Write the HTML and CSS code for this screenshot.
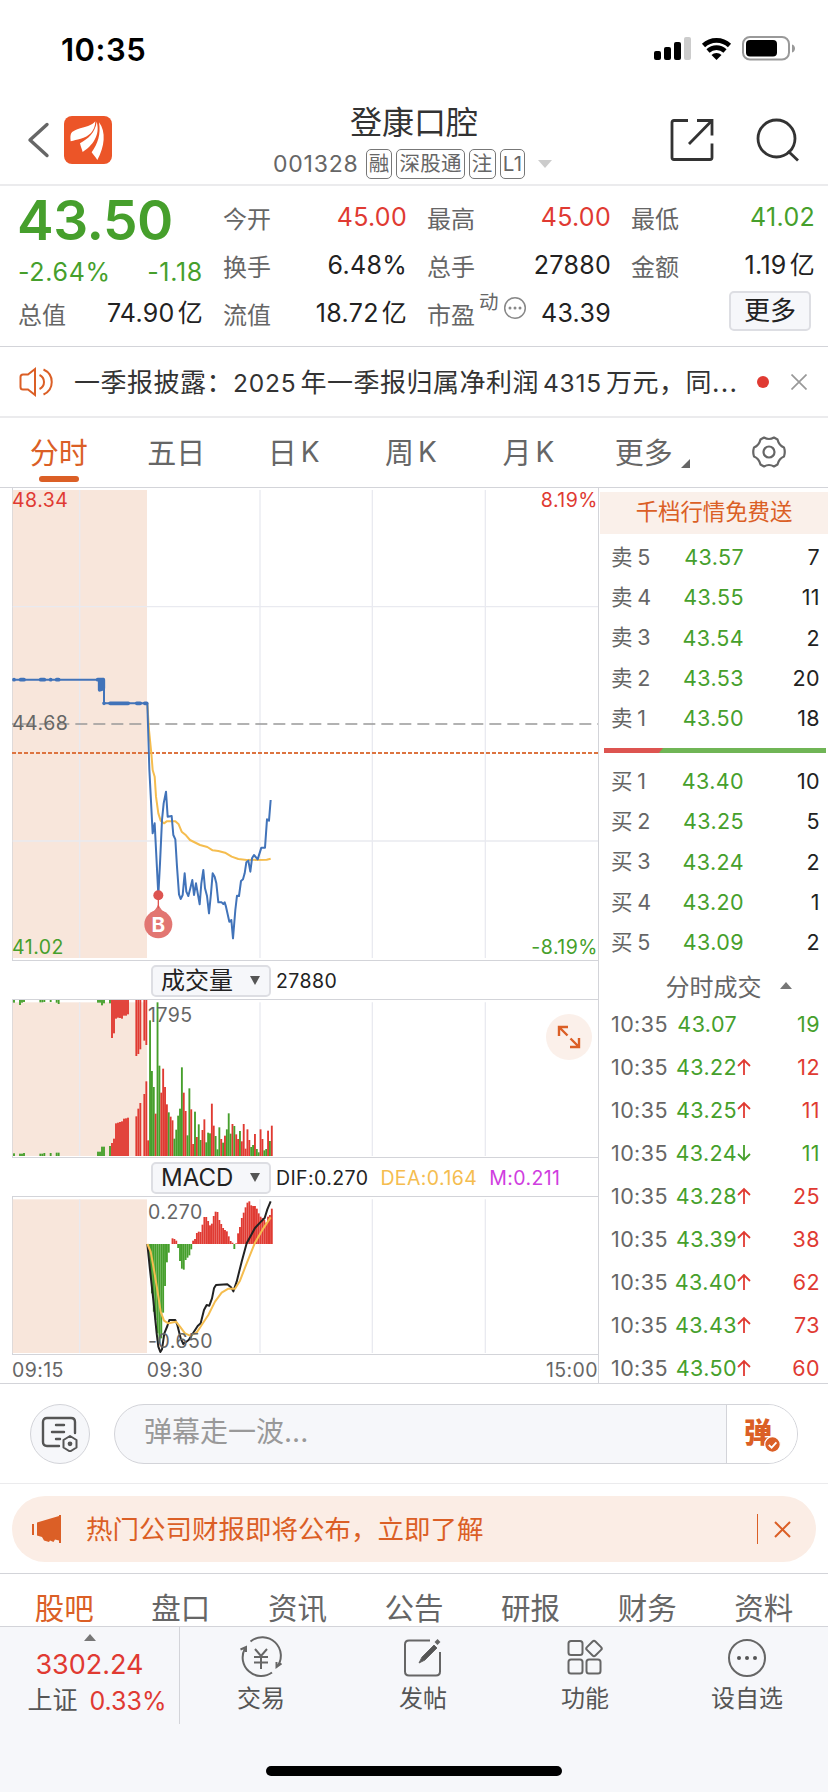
FILE: index.html
```html
<!DOCTYPE html>
<html lang="zh-CN">
<head>
    <meta charset="UTF-8">
    <meta name="viewport" content="width=device-width, initial-scale=1.0">
    <title>登康口腔 001328</title>
    <link rel="stylesheet" href="styles.css">
</head>
<body>
    <div class="status-bar">
        <span class="clock">10:35</span>
        <svg class="status-icons" width="144" height="28" viewBox="0 0 144 28">
            <rect x="1" y="16" width="7" height="9" rx="2"/>
            <rect x="11" y="12" width="7" height="13" rx="2"/>
            <rect x="21" y="7" width="7" height="18" rx="2"/>
            <rect x="31" y="2" width="7" height="23" rx="2" fill="#ccc"/>
            <path d="M50.5 10.5a19 19 0 0 1 26 0M55 16a12.5 12.5 0 0 1 17 0" fill="none" stroke="#000" stroke-width="4.6"/>
            <path d="M58.500 20a7 7 0 0 1 10 0l-5 5z"/>
            <rect x="90" y="2" width="46" height="22.500" rx="7" fill="none" stroke="#999" stroke-width="2"/>
            <rect x="93" y="5" width="31" height="16.500" rx="4"/>
            <path d="M139 9.500c4 1 4 7 0 8z" fill="#999"/>
        </svg>
    </div>

    <header class="header">
        <div class="header-left">
            <svg width="26" height="40" viewBox="0 0 26 40" fill="none" stroke="#666" stroke-width="3.4" stroke-linecap="round" stroke-linejoin="round"><path d="M21 4.500L4 20l17 15.500"/></svg>
            <svg class="logo" width="48" height="48" viewBox="0 0 144 144">
                <rect width="144" height="144" rx="24" fill="#ec5528"/>
                <path d="M20 76C18 52 20 48 40 40c24-9 44-10 54-24-1 30-19 46-44 52-12 3-20 5-30 8z" fill="#fff"/>
                <path d="M56 108c-3-10-6-16-8-26 24-14 46-32 50-65 12 42-14 72-42 91z" fill="#fff"/>
                <path d="M100 132c-6-10-11-14-17-23 18-26 28-52 22-90 22 28 17 74-5 113z" fill="#fff"/>
            </svg>
        </div>
        <div class="header-title">
            <h1>登康口腔</h1>
            <div class="stock-meta">
                <span class="code">001328</span>
                <span class="tag">融</span>
                <span class="tag">深股通</span>
                <span class="tag">注</span>
                <span class="tag">L1</span>
                <i class="tri-down light"></i>
            </div>
        </div>
        <div class="header-right">
            <svg width="44" height="44" viewBox="0 0 44 44" fill="none" stroke="#333" stroke-width="2.800"><path d="M18 2.500H4q-2 0-2 2v35q0 2 2 2h36q2 0 2-2V25.500M27 2.500h15v15M42 2.500L19 26"/></svg>
            <svg width="44" height="44" viewBox="0 0 44 44" fill="none" stroke="#333" stroke-width="2.800"><circle cx="20.500" cy="20.500" r="18.500"/><path d="M32 33l10 9.500"/></svg>
        </div>
    </header>

    <section class="quote">
        <div class="quote-col main">
            <div class="price green">43.50</div>
            <div class="row change green"><span>-2.64%</span><span>-1.18</span></div>
            <div class="row"><label>总值</label><span>74.90<em>亿</em></span></div>
        </div>
        <div class="quote-col">
            <div class="row"><label>今开</label><span class="red">45.00</span></div>
            <div class="row"><label>换手</label><span>6.48%</span></div>
            <div class="row"><label>流值</label><span>18.72<em>亿</em></span></div>
        </div>
        <div class="quote-col">
            <div class="row"><label>最高</label><span class="red">45.00</span></div>
            <div class="row"><label>总手</label><span>27880</span></div>
            <div class="row">
                <label class="pe">市盈<sup>动</sup><svg width="24" height="24" viewBox="0 0 24 24"><circle cx="12" cy="12" r="10.300" fill="none" stroke="#888" stroke-width="1.500"/><g fill="#888"><circle cx="7" cy="12" r="1.500"/><circle cx="12" cy="12" r="1.500"/><circle cx="17" cy="12" r="1.500"/></g></svg></label>
                <span>43.39</span>
            </div>
        </div>
        <div class="quote-col">
            <div class="row"><label>最低</label><span class="green">41.02</span></div>
            <div class="row"><label>金额</label><span>1.19<em>亿</em></span></div>
            <div class="row end"><button class="more-btn">更多</button></div>
        </div>
    </section>

    <section class="notice">
        <svg width="36" height="32" viewBox="0 0 36 32" fill="none" stroke="#db5f26" stroke-width="2"><path d="M16 3v26l-7-5.500H4q-2.500 0-2.500-2.500V11q0-2.500 2.500-2.500h5zM20.500 9c6 3 6 11 0 14M24.500 3.500c11 5 11 20 0 25"/></svg>
        <p>一季报披露：<b>2025</b>年一季报归属净利润<b>4315</b>万元，同<u>...</u></p>
        <i class="dot"></i>
        <svg width="16" height="16" viewBox="0 0 16 16" stroke="#999" stroke-width="1.700"><path d="M.5.5l15 15M15.500.5l-15 15"/></svg>
    </section>

    <nav class="period-tabs">
        <a class="active">分时</a>
        <a>五日</a>
        <a>日<span>K</span></a>
        <a>周<span>K</span></a>
        <a>月<span>K</span></a>
        <a class="more">更多<i></i></a>
        <a class="settings"><svg width="34" height="34" viewBox="0 0 34 34" fill="none" stroke="#666" stroke-width="2.200" stroke-linejoin="round"><path d="M12 2.500Q17 5.500 22 2.500L25.500 4.500Q27 10.500 32 12.500Q33.500 17 32 21.500Q27 23.500 25.500 29.500L22 31.500Q17 28.500 12 31.500L8.500 29.500Q7 23.500 2 21.500Q.5 17 2 12.500Q7 10.500 8.500 4.500Z"/><circle cx="17" cy="17" r="5.500"/></svg></a>
    </nav>

    <main class="market">
        <div class="charts">
            <div class="chart price-chart">
                <svg viewBox="36 24 1758 1416">
                    <rect x="38" y="30" width="403" height="1404" fill="#f8e6db"/>
                    <g stroke="#e9eaf0" stroke-width="4">
                        <path d="M239 30V1434M780 30V1434M1117 30V1434M1456 30V1434M38 380H1794M38 1083H1794"/>
                    </g>
                    <path d="M36 732H1794" stroke="#999" stroke-width="5" stroke-dasharray="36 18" stroke-dashoffset="26"/>
                    <path d="M36 819H1794" stroke="#dd7440" stroke-width="6" stroke-dasharray="12 6"/>
                    <path class="line avg" d="M442 670L447 750 454 820 458 870 464 890 468 950 475 1000 482 1022 492 1030 500 1024H526L536 1033 545 1055 558 1066 570 1080 600 1095 622 1101 638 1111 655 1113 675 1118 695 1130 715 1137 740 1140 800 1139 812 1136"/>
                    <path class="line now" d="M38 599H312V670H442L448 868 458 1060 464 1030 475 1245 480 1150 486 1020 491 970 498 935 503 1010 515 1008 520 1065 526 1078 531 1160 537 1243 542 1257 548 1245 554 1180 559 1235 565 1248 571 1225 577 1200 582 1245 588 1210 599 1273 604 1210 610 1170 615 1225 621 1248 627 1300 633 1240 638 1180 644 1190 649 1210 655 1267H665L670 1272 674 1267 678 1280 688 1325 694 1320 699 1375 706 1290 711 1247 717 1248 723 1203 729 1198 734 1180 739 1147 745 1142 751 1175 756 1135 762 1125 773 1138 784 1103H795L801 1018 807 1022 812 960"/>
                    <path class="dots" d="M42 599h.1M62 599H72M122 599H133M152 599h.1M170 599H176M293 599H309M299 630V599M305 628V599M310 625V599M312 670h.1M330 670H385M410 670H421M434 670H440"/>
                    <g fill="#e27672">
                        <path d="M475 1272Q482 1292 500 1300H450Q468 1292 475 1272Z"/>
                        <circle cx="475" cy="1333" r="42"/>
                        <path d="M475 1246V1285" stroke="#dd5450" stroke-width="4"/>
                        <circle cx="475" cy="1246" r="15" fill="#dd5450"/>
                    </g>
                    <text x="475" y="1356" class="buy-mark">B</text>
                </svg>
                <span class="label top left red">48.34</span>
                <span class="label top right red">8.19%</span>
                <span class="label mid left">44.68</span>
                <span class="label bottom left green">41.02</span>
                <span class="label bottom right green">-8.19%</span>
            </div>
            <div class="indicator">
                <button class="select">成交量<i class="tri-down"></i></button>
                <span>27880</span>
            </div>
            <div class="chart sub-chart">
                <svg viewBox="0 0 1758 471">
                    <rect x="2" y="7" width="403" height="461" fill="#f8e6db"/>
                    <path d="M203 7V468M744 7V468M1081 7V468M1420 7V468" stroke="#e9eaf0" stroke-width="4"/>
                    <g id="volume"></g>
                </svg>
                <span class="label sub-top">1795</span>
                <div class="expand">
                    <svg width="24" height="24" viewBox="0 0 24 24" fill="none" stroke="#db5f26" stroke-width="2.400"><path d="M2 11V2h9M2 2l8.500 8.500M22 13v9h-9M22 22l-8.500-8.500"/></svg>
                </div>
            </div>
            <div class="indicator">
                <button class="select">MACD<i class="tri-down"></i></button>
                <span>DIF:0.270</span>
                <span class="yellow">DEA:0.164</span>
                <span class="purple">M:0.211</span>
            </div>
            <div class="chart sub-chart">
                <svg viewBox="0 0 1758 471">
                    <rect x="2" y="7" width="403" height="461" fill="#f8e6db"/>
                    <path d="M203 7V468M744 7V468M1081 7V468M1420 7V468" stroke="#e9eaf0" stroke-width="4"/>
                    <g id="macd"></g>
                    <g transform="translate(354 -21)">
                        <path class="line dif" d="M52 162L60 240 70 330 80 430 85 470 91 486 96 478 103 430 112 408 118 390H136L142 405 152 445 160 462 176 450 190 428 203 408 212 400 222 360 230 345 238 347 246 325 252 295 258 285 292 283 303 292 310 304 320 275 335 215 350 160 362 138 375 114 390 98 404 84 412 58 422 34"/>
                        <path class="line avg" d="M52 162L62 185 72 240 82 300 92 365 102 392 115 400 138 395 150 410 165 430 180 437 200 428 215 405 235 375 255 335 275 308 295 296 315 296 330 272 350 220 375 158 400 115 422 82"/>
                    </g>
                </svg>
                <span class="label sub-top">0.270</span>
                <span class="label sub-bottom">-0.650</span>
            </div>
            <div class="time-axis"><span>09:15</span><span>09:30</span><span>15:00</span></div>
        </div>

        <aside class="book">
            <div class="promo">千档行情免费送</div>
            <ul class="levels" id="sells"></ul>
            <div class="ratio"><i></i></div>
            <ul class="levels" id="buys"></ul>
            <div class="ticks-title">分时成交<i class="tri-up"></i></div>
            <ul class="ticks" id="ticks"></ul>
        </aside>
    </main>

    <section class="danmu">
        <div class="danmu-settings">
            <svg width="40" height="36" viewBox="0 0 40 36" fill="none" stroke="#555" stroke-width="2.400" stroke-linecap="round"><path d="M19 30H7q-4 0-4-4V6q0-4 4-4h24q4 0 4 4v11M16 9h8M12 16h12M16 23h4"/><path d="M30 20l6.500 4v7.500L30 35.500l-6.500-4V24z" stroke-width="2" stroke-linejoin="round"/><circle cx="30" cy="27.800" r="1.200"/></svg>
        </div>
        <div class="danmu-input">
            <span>弹幕走一波...</span>
            <div class="danmu-toggle">弹<svg width="17" height="17" viewBox="0 0 17 17"><circle cx="8.500" cy="8.500" r="7.800" fill="#db5f26" stroke="#fff" stroke-width="1.200"/><path d="M4.800 8.800l2.800 2.800 4.800-5.300" fill="none" stroke="#fff" stroke-width="1.800"/></svg></div>
        </div>
    </section>

    <section class="hot-wrap">
        <div class="hot">
            <svg width="32" height="28" viewBox="0 0 32 28" fill="#db5f26"><path d="M1 9h2v11H1zM6 7.500L28 1V0h2v28h-2v-2.500l-4-1-1.500 2.500-3.500-1.500-1 1.500-5-1.500-2-3.500-5-1.500z"/></svg>
            <p>热门公司财报即将公布，立即了解</p>
            <i class="sep"></i>
            <svg width="17" height="17" viewBox="0 0 17 17" stroke="#db5f26" stroke-width="2"><path d="M1 1l15 15M16 1L1 16"/></svg>
        </div>
    </section>

    <nav class="info-tabs">
        <a class="active">股吧</a>
        <a>盘口</a>
        <a>资讯</a>
        <a>公告</a>
        <a>研报</a>
        <a>财务</a>
        <a>资料</a>
    </nav>

    <footer class="bottom-bar">
        <div class="index">
            <i class="tri-up"></i>
            <strong>3302.24</strong>
            <div><span>上证</span><b>0.33%</b></div>
        </div>
        <a>
            <svg viewBox="0 0 44 44"><path d="M11.500 5.500A18.500 18.500 0 0 1 38 31M33 36.500A18.500 18.500 0 0 1 6 12.500M1.500 13.500L7 11v5M42.500 27.500l-5 3.500V26"/><path d="M16 13l6 7 6-7M22 20v13M15 21h14M15 26.500h14"/></svg>
            交易
        </a>
        <a>
            <svg viewBox="0 0 44 44"><path d="M29 4.500H8q-4 0-4 4v27q0 4 4 4h27q4 0 4-4V16"/><path d="M18 27l3-6 12-12 3 3-12 12z" fill="#555" stroke-width="1"/><path d="M35 7.500l3-3" stroke-width="4"/></svg>
            发帖
        </a>
        <a>
            <svg viewBox="0 0 44 44"><rect x="5.500" y="5" width="14" height="14" rx="2.500"/><rect x="5.500" y="23.500" width="14" height="14" rx="2.500"/><rect x="23.500" y="23.500" width="14" height="14" rx="2.500"/><rect x="25" y="6.500" width="12" height="12" rx="2" transform="rotate(45 31 12.500)"/></svg>
            功能
        </a>
        <a>
            <svg viewBox="0 0 44 44"><circle cx="22" cy="22" r="18"/><g fill="#555" stroke="none"><circle cx="14" cy="22" r="2"/><circle cx="22" cy="22" r="2"/><circle cx="30" cy="22" r="2"/></g></svg>
            设自选
        </a>
    </footer>
    <div class="home-indicator"><i></i></div>

    <script src="script.js"></script>
</body>
</html>
```

FILE: styles.css
```css
* {
    box-sizing: border-box;
}

:root {
    --red: #e03a32;
    --green: #469f2c;
    --orange: #db5f26;
    --yellow: #f5bd4f;
    --text: #222;
    --muted: #666;
    --line: #d3d4d9;
    --panel: #f6f7fa;
}

body {
    margin: 0;
    width: 828px;
    height: 1792px;
    overflow: hidden;
    background: #fff;
    color: var(--text);
    font-family: Inter, "Noto Sans CJK SC", sans-serif;
    font-size: 24px;
}

h1, p, ul {
    margin: 0;
    padding: 0;
    font-weight: 400;
}

ul {
    list-style: none;
}

i, em {
    font-style: normal;
}

svg {
    display: block;
    flex-shrink: 0;
}

button {
    font-family: inherit;
    color: var(--text);
    background: var(--panel);
    border: 2px solid #dddee3;
    border-radius: 5px;
    padding: 0;
}

.red { color: var(--red); }
.green { color: var(--green); }
.yellow { color: var(--yellow); }
.purple { color: #cf3de0; }

.tri-down, .tri-up {
    width: 0;
    height: 0;
    border: 6px solid transparent;
}

.tri-down {
    border-top: 9px solid #555;
    border-bottom: 0;
}

.tri-down.light {
    border-width: 8px 7px 0;
    border-top-color: #ccc;
    margin-left: 9px;
}

.tri-up {
    border-bottom: 7px solid #777;
    border-top: 0;
}

/* Status bar */
.status-bar {
    height: 94px;
    padding: 4px 31px 0 61px;
    display: flex;
    justify-content: space-between;
    align-items: center;
}

.clock {
    font-size: 31px;
    font-weight: 600;
    color: #000;
    letter-spacing: 0.5px;
}

/* Header */
.header {
    height: 92px;
    border-bottom: 2px solid #ebebed;
    display: grid;
    grid-template-columns: 230px 1fr 230px;
    align-items: center;
}

.header-left, .header-right {
    display: flex;
    align-items: center;
}

.header-left {
    padding-left: 26px;
    gap: 12px;
    margin-top: 2px;
}

.header-right {
    justify-content: flex-end;
    gap: 42px;
    padding-right: 28px;
    margin-top: 2px;
}

.header-title {
    text-align: center;
}

.header-title h1 {
    font-size: 32px;
    line-height: 42px;
    margin-top: 6px;
    color: #333;
}

.stock-meta {
    display: flex;
    align-items: center;
    gap: 4px;
    padding-left: 43px;
    height: 36px;
    margin-top: 2px;
    color: var(--muted);
}

.stock-meta .code {
    font-size: 23px;
    letter-spacing: 0.8px;
    margin-right: 3px;
}

.tag {
    height: 30px;
    line-height: 27px;
    padding: 0 2px;
    border: 1.5px solid #777;
    border-radius: 5px;
    font-size: 20.5px;
    letter-spacing: 0.3px;
}

/* Quote */
.quote {
    height: 161px;
    border-bottom: 1px solid var(--line);
    padding: 7px 13px 0 19px;
    display: grid;
    grid-template-columns: repeat(4, 184px);
    column-gap: 20px;
}

.row {
    display: flex;
    justify-content: space-between;
    align-items: center;
    height: 48px;
    font-size: 25px;
    letter-spacing: 0.3px;
    white-space: nowrap;
}

.row.end {
    justify-content: flex-end;
}

.row label {
    font-size: 24px;
    letter-spacing: 0;
    color: var(--muted);
}

.row em {
    margin-left: 3px;
    line-height: 0;
}

.quote-col.main {
    margin-left: -1px;
}

.quote-col.main .price {
    height: 56px;
    margin-left: -1px;
    font-size: 55px;
    line-height: 55px;
    font-weight: 600;
    letter-spacing: -0.5px;
}

.quote-col.main .change {
    height: 40px;
    padding-top: 6px;
    letter-spacing: 0.7px;
}

.row label.pe {
    display: flex;
    align-items: center;
}

.pe sup {
    font-size: 19.5px;
    line-height: 20px;
    margin: -22px 4px 0 4px;
}

.pe svg {
    margin-top: -10px;
}

.more-btn {
    width: 82px;
    height: 40px;
    margin-right: 4px;
    margin-top: -4px;
    font-size: 26px;
    line-height: 34px;
}

/* Notice */
.notice {
    height: 71px;
    border-bottom: 2px solid #ebebed;
    display: flex;
    align-items: center;
    padding: 0 21px 0 19px;
}

.notice p {
    width: 683px;
    margin: -3px 0 0 19px;
    font-size: 26px;
    letter-spacing: 0.5px;
    color: #333;
    white-space: nowrap;
}

.notice b {
    font-weight: 400;
    font-size: 24.5px;
    letter-spacing: 0.8px;
    margin-right: 4px;
}

.notice b:last-of-type {
    margin-left: 4px;
}

.notice u {
    text-decoration: none;
    letter-spacing: 1.2px;
}

.notice .dot {
    width: 12px;
    height: 12px;
    border-radius: 50%;
    background: var(--red);
    margin-right: 22px;
}

/* Period tabs */
.period-tabs, .info-tabs {
    display: flex;
}

.period-tabs {
    height: 70px;
    border-bottom: 1px solid var(--line);
}

.period-tabs a {
    flex: 1;
    position: relative;
    display: flex;
    align-items: center;
    justify-content: center;
    padding-bottom: 4px;
    font-size: 29px;
    color: var(--muted);
}

.period-tabs a span {
    margin: 2px 0 0 4px;
    font-size: 28px;
}

.period-tabs .active, .info-tabs .active {
    color: var(--orange);
}

.period-tabs .active::after {
    content: "";
    position: absolute;
    left: 39px;
    bottom: 5px;
    width: 40px;
    height: 6px;
    border-radius: 3px;
    background: var(--orange);
}

.period-tabs .more {
    padding-right: 6px;
}

.period-tabs .settings {
    padding-bottom: 2px;
}

.period-tabs .more i {
    border-left: 9px solid transparent;
    border-bottom: 9px solid #666;
    margin: 25px -13px 0 8px;
}

/* Charts */
.market {
    display: flex;
    height: 896px;
    border-bottom: 1px solid var(--line);
}

.charts {
    width: 599px;
    padding-left: 12px;
    border-right: 1px solid var(--line);
}

.chart {
    position: relative;
    border-bottom: 1px solid var(--line);
    border-left: 1px solid var(--line);
}

.chart svg {
    width: 586px;
    margin-left: -1px;
}

.price-chart {
    height: 473px;
}

.price-chart > svg {
    height: 472px;
}

.sub-chart {
    height: 158px;
}

.sub-chart > svg {
    height: 157px;
}

.line {
    fill: none;
    stroke-width: 6;
    stroke-linejoin: round;
}

.now { stroke: #4173b9; }
.avg { stroke: var(--yellow); }
.dif { stroke: #222; }

.dots {
    fill: none;
    stroke: #4173b9;
    stroke-width: 11;
    stroke-linecap: round;
}

.buy-mark {
    fill: #fff;
    font-size: 62px;
    font-weight: 700;
    text-anchor: middle;
}

.label {
    position: absolute;
    font-size: 19.5px;
    line-height: 24px;
    letter-spacing: 0.5px;
    color: var(--muted);
}

.label.red { color: var(--red); }
.label.green { color: var(--green); }
.label.left { left: -1px; }
.label.right { right: 0; }
.label.top { top: 0; }
.label.mid { top: 223px; }
.label.bottom { bottom: 1px; }

.label.sub-top {
    left: 135px;
    top: 3px;
}

.label.sub-bottom {
    left: 135px;
    bottom: 1px;
}

.indicator {
    display: flex;
    align-items: center;
    height: 39px;
    padding: 1px 0 0 139px;
    font-size: 19.5px;
    letter-spacing: 0.4px;
    border-bottom: 1px solid var(--line);
}

.indicator span {
    margin-right: 12px;
}

.select {
    display: flex;
    align-items: center;
    justify-content: space-between;
    width: 120px;
    height: 32px;
    padding: 0 9px 0 8px;
    margin-right: 5px;
    font-size: 24px;
    line-height: 28px;
}

.select .tri-down {
    border-left-width: 5px;
    border-right-width: 5px;
}

.expand {
    position: absolute;
    right: 6px;
    top: 14px;
    width: 46px;
    height: 46px;
    border-radius: 50%;
    background: #fbf0ea;
    display: flex;
    align-items: center;
    justify-content: center;
}

.chart .expand svg {
    width: 24px;
    margin: 0;
}

.time-axis {
    display: flex;
    font-size: 19.5px;
    line-height: 29px;
    letter-spacing: 0.4px;
    color: var(--muted);
    padding: 1px 0 0;
}

.time-axis span:nth-child(2) {
    margin-left: 83px;
}

.time-axis span:last-child {
    margin-left: auto;
}

/* Order book */
.book {
    flex: 1;
    padding-left: 1px;
}

.promo {
    height: 42px;
    margin-top: 4px;
    line-height: 39px;
    text-align: center;
    font-size: 22.4px;
    color: var(--orange);
    background: #faf0ea;
}

.levels {
    font-size: 21.5px;
    letter-spacing: 0.4px;
}

#sells {
    padding-top: 3px;
    height: 214px;
}

.levels li {
    height: 40.3px;
    display: grid;
    grid-template-columns: 50px 83px 1fr;
    align-items: center;
    padding: 0 8px 0 11px;
}

.levels li span:first-child {
    margin-top: -4px;
    color: var(--muted);
    word-spacing: -2px;
    white-space: nowrap;
}

.levels li span:nth-child(2) {
    color: var(--green);
}

.levels li span + span, .ticks .qty {
    text-align: right;
}

.ratio {
    height: 5px;
    margin: 0 2px 0 4px;
    background: #70b556;
}

.ratio i {
    display: block;
    width: 59px;
    height: 5px;
    background: #dd5450;
    clip-path: polygon(0 0, 100% 0, 93% 100%, 0 100%);
}

#buys {
    padding-top: 8px;
    height: 212px;
}

.ticks-title {
    height: 38px;
    display: flex;
    align-items: center;
    justify-content: center;
    gap: 18px;
    padding: 2px 0 0 29px;
    font-size: 24px;
    color: var(--muted);
}

.ticks {
    font-size: 21.5px;
    letter-spacing: 0.4px;
}

.ticks li {
    height: 42.9px;
    display: grid;
    grid-template-columns: 57px 69px 16px 1fr;
    align-items: center;
    padding: 0 8px 0 11px;
}

.ticks .time {
    color: var(--muted);
}

.ticks .deal {
    color: var(--green);
    text-align: right;
}

.ticks svg {
    fill: none;
    stroke: currentColor;
    stroke-width: 1.8;
}

/* Danmu */
.danmu {
    height: 100px;
    padding: 20px 30px 0;
    display: flex;
    gap: 24px;
    border-bottom: 1px solid #ebebed;
}

.danmu-settings {
    width: 60px;
    height: 60px;
    border: 1px solid var(--line);
    border-radius: 50%;
    background: var(--panel);
    display: flex;
    align-items: center;
    justify-content: center;
}

.danmu-input {
    flex: 1;
    height: 60px;
    border: 1px solid var(--line);
    border-radius: 30px;
    background: var(--panel);
    display: flex;
    overflow: hidden;
    color: #999;
    font-size: 28px;
    line-height: 54px;
}

.danmu-input > span {
    flex: 1;
    padding-left: 29px;
}

.danmu-toggle {
    position: relative;
    width: 71px;
    border-left: 1px solid var(--line);
    background: #fff;
    color: var(--orange);
    font-weight: 900;
    padding-left: 17px;
    line-height: 57px;
}

.danmu-toggle svg {
    position: absolute;
    left: 37px;
    top: 31px;
}

/* Hot banner */
.hot-wrap {
    height: 90px;
    padding: 12px 12px 0;
    border-bottom: 1px solid var(--line);
}

.hot {
    height: 66px;
    border-radius: 33px;
    background: #fbede5;
    color: var(--orange);
    display: flex;
    align-items: center;
    padding: 0 25px 0 19px;
    font-size: 26.5px;
}

.hot p {
    flex: 1;
    margin: -4px 0 0 23px;
}

.hot .sep {
    width: 1px;
    height: 30px;
    background: var(--orange);
    margin-right: 16px;
}

/* Info tabs */
.info-tabs {
    height: 53px;
    padding: 0 6px;
    border-bottom: 1px solid var(--line);
}

.info-tabs a {
    flex: 1;
    text-align: center;
    font-size: 29.5px;
    line-height: 68px;
    color: var(--muted);
    overflow: hidden;
}

/* Bottom bar */
.bottom-bar {
    display: flex;
    height: 97px;
    background: var(--panel);
}

.bottom-bar .index {
    width: 180px;
    border-right: 1px solid var(--line);
    display: flex;
    flex-direction: column;
    align-items: center;
    padding-top: 7px;
    font-size: 25px;
}

.index strong {
    font-size: 27px;
    line-height: 40px;
    font-weight: 400;
    color: var(--red);
    margin-top: 4px;
}

.index div {
    display: flex;
    gap: 12px;
    line-height: 32px;
    padding-left: 15px;
    align-self: stretch;
    justify-content: center;
}

.index span {
    color: #555;
    margin-top: -1px;
}

.index b {
    font-weight: 400;
    color: var(--red);
}

.bottom-bar a {
    flex: 1;
    display: flex;
    flex-direction: column;
    align-items: center;
    padding-top: 9px;
    font-size: 24px;
    line-height: 38px;
    color: #555;
}

.bottom-bar a svg {
    width: 44px;
    height: 44px;
    fill: none;
    stroke: #666;
    stroke-width: 2;
}

.home-indicator {
    height: 68px;
    padding-top: 42px;
    background: var(--panel);
}

.home-indicator i {
    display: block;
    width: 296px;
    height: 10px;
    margin: 0 auto;
    border-radius: 5px;
    background: #000;
}
```

FILE: script.js
```js
const RED = '#e03a32';
const GREEN = '#469f2c';
const STEP = 5.62;

// one bar per minute from 09:30, positive = up, negative = down
const volume = [47, -407, -255, -207, 127, -461, -271, 190, 262, 207, 155, -131, 118, 107, -52, -79, -121, -142, -266, 190, 135, -62, -203, 140, 36, -133, 57, -95, -48, 78, 110, -41, -70, -68, 157, 91, -60, -20, -86, 51, -40, 61, -80, -128, -67, 96, -90, 65, 51, -75, 44, 96, 22, 80, 48, -27, -33, 66, -21, -11, 80, 51, -17, -21, 76, -45, 91];

const macd = [0, -78, -148, -203, -228, -268, -298, -283, -206, -126, -55, -26, 0, 17, 15, 10, -12, -51, -74, -77, -48, -41, -34, -16, 10, 15, 33, 37, 36, 58, 81, 81, 69, 56, 61, 84, 97, 96, 72, 60, 48, 42, 38, 23, 9, 4, -15, 2, 32, 51, 78, 94, 110, 124, 128, 116, 114, 114, 106, 92, 82, 78, 72, 64, 82, 87, 106];

// call auction: [x, bar from bottom, bar from top]
const auction = [
    [6, -8, 8], [24, -7, 15], [30, -7, 8], [36, -9, 6], [85, -7, 7], [91, -7, 7], [97, -9, 6], [116, -9, 6], [134, -10, 8], [140, -10, 12],
    [258, -13, 8], [264, -13, 8], [270, -28, 16], [276, -28, 10], [294, -30, 10],
    [300, 39, 114], [306, 52, 100], [312, 98, 56], [318, 100, 53], [324, 102, 54], [330, 104, 56], [336, 112, 47], [342, 113, 47], [348, 115, 43],
    [373, 119, 168], [379, 142, 162], [385, 159, 148], [397, 186, 122], [403, 224, 135]
];

function bar(x, y, height, color) {
    return `<rect x="${x - 2.8}" y="${y}" width="5.6" height="${height}" fill="${color}"/>`;
}

function drawVolume() {
    let html = '';
    auction.forEach(([x, v, top]) => {
        const color = v > 0 ? RED : GREEN;
        const h = Math.abs(v);
        html += bar(x, 468 - h, h, color) + bar(x, 0, top, color);
    });
    volume.forEach((v, i) => {
        const h = Math.abs(v);
        html += bar(408.5 + STEP * i, 468 - h, h, v > 0 ? RED : GREEN);
    });
    document.getElementById('volume').innerHTML = html;
}

function drawMacd() {
    document.getElementById('macd').innerHTML = macd.map((v, i) =>
        bar(408.5 + STEP * i, v > 0 ? 141 - v : 141, Math.abs(v), v > 0 ? RED : GREEN)
    ).join('');
}

function fillLevels(id, name, rows) {
    document.getElementById(id).innerHTML = rows.map(([n, price, qty]) =>
        `<li><span>${name} ${n}</span><span>${price}</span><span>${qty}</span></li>`
    ).join('');
}

const arrows = {
    up: '<svg class="red" width="14" height="18" viewBox="0 0 14 18"><path d="M7 17V2M1 8l6-6 6 6"/></svg>',
    down: '<svg class="green" width="14" height="18" viewBox="0 0 14 18"><path d="M7 1v15M1 10l6 6 6-6"/></svg>',
    none: '<i></i>'
};

function fillTicks(rows) {
    document.getElementById('ticks').innerHTML = rows.map(([price, dir, qty, color]) =>
        `<li><span class="time">10:35</span><span class="deal">${price}</span>${arrows[dir]}<span class="qty ${color}">${qty}</span></li>`
    ).join('');
}

drawVolume();
drawMacd();
fillLevels('sells', '卖', [[5, '43.57', 7], [4, '43.55', 11], [3, '43.54', 2], [2, '43.53', 20], [1, '43.50', 18]]);
fillLevels('buys', '买', [[1, '43.40', 10], [2, '43.25', 5], [3, '43.24', 2], [4, '43.20', 1], [5, '43.09', 2]]);
fillTicks([
    ['43.07', 'none', 19, 'green'],
    ['43.22', 'up', 12, 'red'],
    ['43.25', 'up', 11, 'red'],
    ['43.24', 'down', 11, 'green'],
    ['43.28', 'up', 25, 'red'],
    ['43.39', 'up', 38, 'red'],
    ['43.40', 'up', 62, 'red'],
    ['43.43', 'up', 73, 'red'],
    ['43.50', 'up', 60, 'red']
]);
```
